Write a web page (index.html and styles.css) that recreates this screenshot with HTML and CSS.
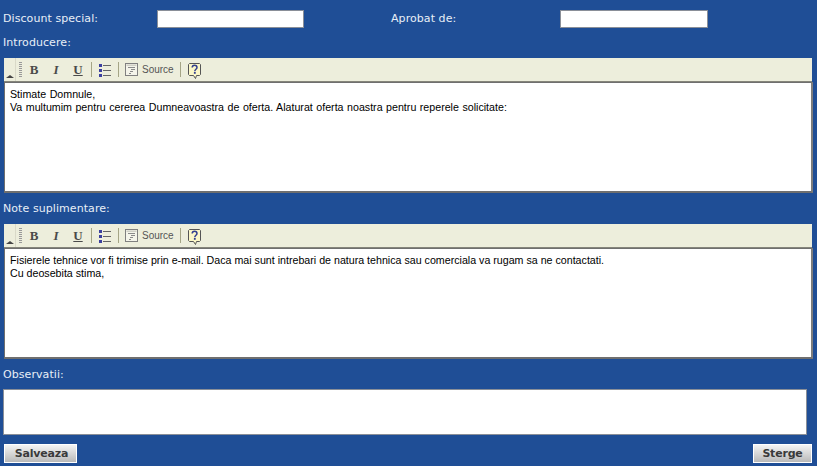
FILE: index.html
```html
<!DOCTYPE html>
<html lang="ro">
<head>
<meta charset="utf-8">
<title>Oferta</title>
<link rel="stylesheet" href="styles.css">
</head>
<body>
<svg class="defs" width="0" height="0" aria-hidden="true">
  <symbol id="i-list" viewBox="0 0 12 14">
    <rect x="0" y="1" width="3" height="3" fill="#3b3f9e"/><rect x="0" y="6" width="3" height="3" fill="#3b3f9e"/><rect x="0" y="11" width="3" height="3" fill="#3b3f9e"/>
    <rect x="4" y="2" width="8" height="1" fill="#666"/><rect x="4" y="7" width="8" height="1" fill="#666"/><rect x="4" y="12" width="8" height="1" fill="#666"/>
  </symbol>
  <symbol id="i-source" viewBox="0 0 13 13">
    <rect x="0.5" y="0.5" width="12" height="12" fill="#f4f4ea" stroke="#808080"/>
    <rect x="1.5" y="1.5" width="10" height="1.5" fill="#cfcfc6"/>
    <path d="M3 4.5h7M6 6.5h4M5 8.5h3M4 10.5h2" stroke="#8a8a8a" fill="none"/>
  </symbol>
  <symbol id="i-help" viewBox="0 0 13 16">
    <path d="M1.5.5h10l1 1v10l-1 1H8.5l-1 3-2-3h-4l-1-1v-10z" fill="#fbf7c8" stroke="#555"/>
    <path d="M4.2 4.6c0-3 4.8-3 4.8 0 0 1.7-2.2 1.7-2.2 3.6" fill="none" stroke="#33408f" stroke-width="1.5"/>
    <rect x="5.9" y="9" width="1.8" height="1.8" fill="#33408f"/>
  </symbol>
</svg>
<main class="form">
  <div class="top-row">
    <label class="label label-discount">Discount special:</label>
    <input class="field field-discount" type="text">
    <label class="label label-aprobat">Aprobat de:</label>
    <input class="field" type="text">
  </div>
  <div class="label section-label">Introducere:</div>
  <section class="editor">
    <div class="toolbar">
      <span class="collapse"><i></i></span>
      <span class="grip"></span>
      <b class="tool tool-b">B</b>
      <i class="tool tool-i">I</i>
      <u class="tool tool-u">U</u>
      <span class="sep sep-first"></span>
      <svg class="ic-list"><use href="#i-list"/></svg>
      <span class="sep"></span>
      <svg class="ic-source"><use href="#i-source"/></svg>
      <span class="source">Source</span>
      <span class="sep"></span>
      <svg class="ic-help"><use href="#i-help"/></svg>
    </div>
    <div class="content content-wide">Stimate Domnule,<br>Va multumim pentru cererea Dumneavoastra de oferta. Alaturat oferta noastra pentru reperele solicitate:</div>
  </section>
  <div class="label section-label label-note">Note suplimentare:</div>
  <section class="editor">
    <div class="toolbar">
      <span class="collapse"><i></i></span>
      <span class="grip"></span>
      <b class="tool tool-b">B</b>
      <i class="tool tool-i">I</i>
      <u class="tool tool-u">U</u>
      <span class="sep sep-first"></span>
      <svg class="ic-list"><use href="#i-list"/></svg>
      <span class="sep"></span>
      <svg class="ic-source"><use href="#i-source"/></svg>
      <span class="source">Source</span>
      <span class="sep"></span>
      <svg class="ic-help"><use href="#i-help"/></svg>
    </div>
    <div class="content">Fisierele tehnice vor fi trimise prin e-mail. Daca mai sunt intrebari de natura tehnica sau comerciala va rugam sa ne contactati.<br>Cu deosebita stima,</div>
  </section>
  <div class="label section-label label-obs">Observatii:</div>
  <textarea class="notes"></textarea>
  <div class="actions">
    <button class="btn btn-save" type="button">Salveaza</button>
    <button class="btn btn-del" type="button">Sterge</button>
  </div>
</main>
</body>
</html>
```
FILE: styles.css
```css
* { box-sizing: border-box; }
html, body { margin: 0; height: 466px; overflow: hidden; }
body { background: #1f4e96; }
.defs { position: absolute; }
.form { width: 817px; padding: 10px 5px 0 3px; }
.label {
  color: #e8eef7;
  font: 11px/14px "DejaVu Sans", sans-serif;
  letter-spacing: 0.07px;
}
.top-row { display: flex; height: 18px; align-items: flex-start; }
.top-row .label { padding-top: 2px; }
.label-discount { width: 154px; }
.label-aprobat { width: 169px; margin-left: 87px; }
.field {
  display: block;
  width: 148px;
  height: 18px;
  margin: 0;
  padding: 0;
  background: #fff;
  border: 1px solid #8a8f98;
  border-radius: 0;
}
.field-discount { width: 147px; }
.section-label { height: 14px; margin-top: 8px; }
.editor { margin: 8px 0 0 1px; width: 808px; }
.toolbar {
  display: flex;
  align-items: center;
  height: 24px;
  background: #edeedc;
  border-bottom: 1px solid #85857a;
}
.collapse {
  display: flex;
  align-items: flex-end;
  justify-content: center;
  width: 12px;
  height: 23px;
  padding-bottom: 3px;
  border-right: 1px solid #d9d9c8;
}
.collapse i {
  width: 0;
  height: 0;
  border: 4px solid transparent;
  border-top-width: 0;
  border-bottom: 3px solid #444;
}
.grip {
  width: 3px;
  height: 15px;
  margin: 0 1px 0 3px;
  background: repeating-linear-gradient(#999 0 1px, #edeedc 1px 2px);
}
.tool {
  width: 22px;
  margin: 0;
  color: #4a4a4a;
  font-family: "Liberation Serif", serif;
  font-size: 13px;
  font-weight: 700;
  line-height: 16px;
  text-align: center;
}
.tool-i { font-style: italic; }
.sep { width: 1px; height: 15px; background: #a5a586; margin: 0 6px; }
.sep-first { margin-left: 2px; }
.ic-list { width: 12px; height: 14px; margin: 0 1px; }
.ic-source { width: 13px; height: 13px; }
.source {
  color: #555;
  font: 10px/14px "Liberation Sans", sans-serif;
  width: 32px;
  margin-left: 4px;
}
.ic-help { width: 13px; height: 16px; margin: 2px 0 0 1px; }
.content {
  width: 809px;
  height: 111px;
  padding: 5px 5px;
  background: #fff;
  border: 2px solid;
  border-color: #6f6f6f #7d7d7d #6f6f6f #6f6f6f;
  border-top-width: 1px;
  border-left-width: 1px;
  color: #000;
  font: 10.67px/13px "Liberation Sans", sans-serif;
}
.content-wide { word-spacing: 0.55px; }
.label-note { margin-top: 9px; }
.label-obs { margin-top: 9px; }
.notes {
  display: block;
  width: 804px;
  height: 46px;
  margin: 7px 0 0;
  padding: 0;
  background: #fff;
  border: 1px solid #8a8f98;
  border-radius: 0;
  resize: none;
}
.actions { display: flex; justify-content: space-between; width: 808px; margin: 9px 0 0 1px; }
.btn {
  height: 19px;
  padding: 0;
  color: #3a3a3a;
  font: 700 11px/15px "DejaVu Sans", sans-serif;
  letter-spacing: -0.2px;
  background: linear-gradient(#f4f4f4, #b9b9b9);
  border: 1px solid #fff;
  border-radius: 0;
}
.btn-save { width: 73px; padding-left: 2px; }
.btn-del { width: 59px; }
```
